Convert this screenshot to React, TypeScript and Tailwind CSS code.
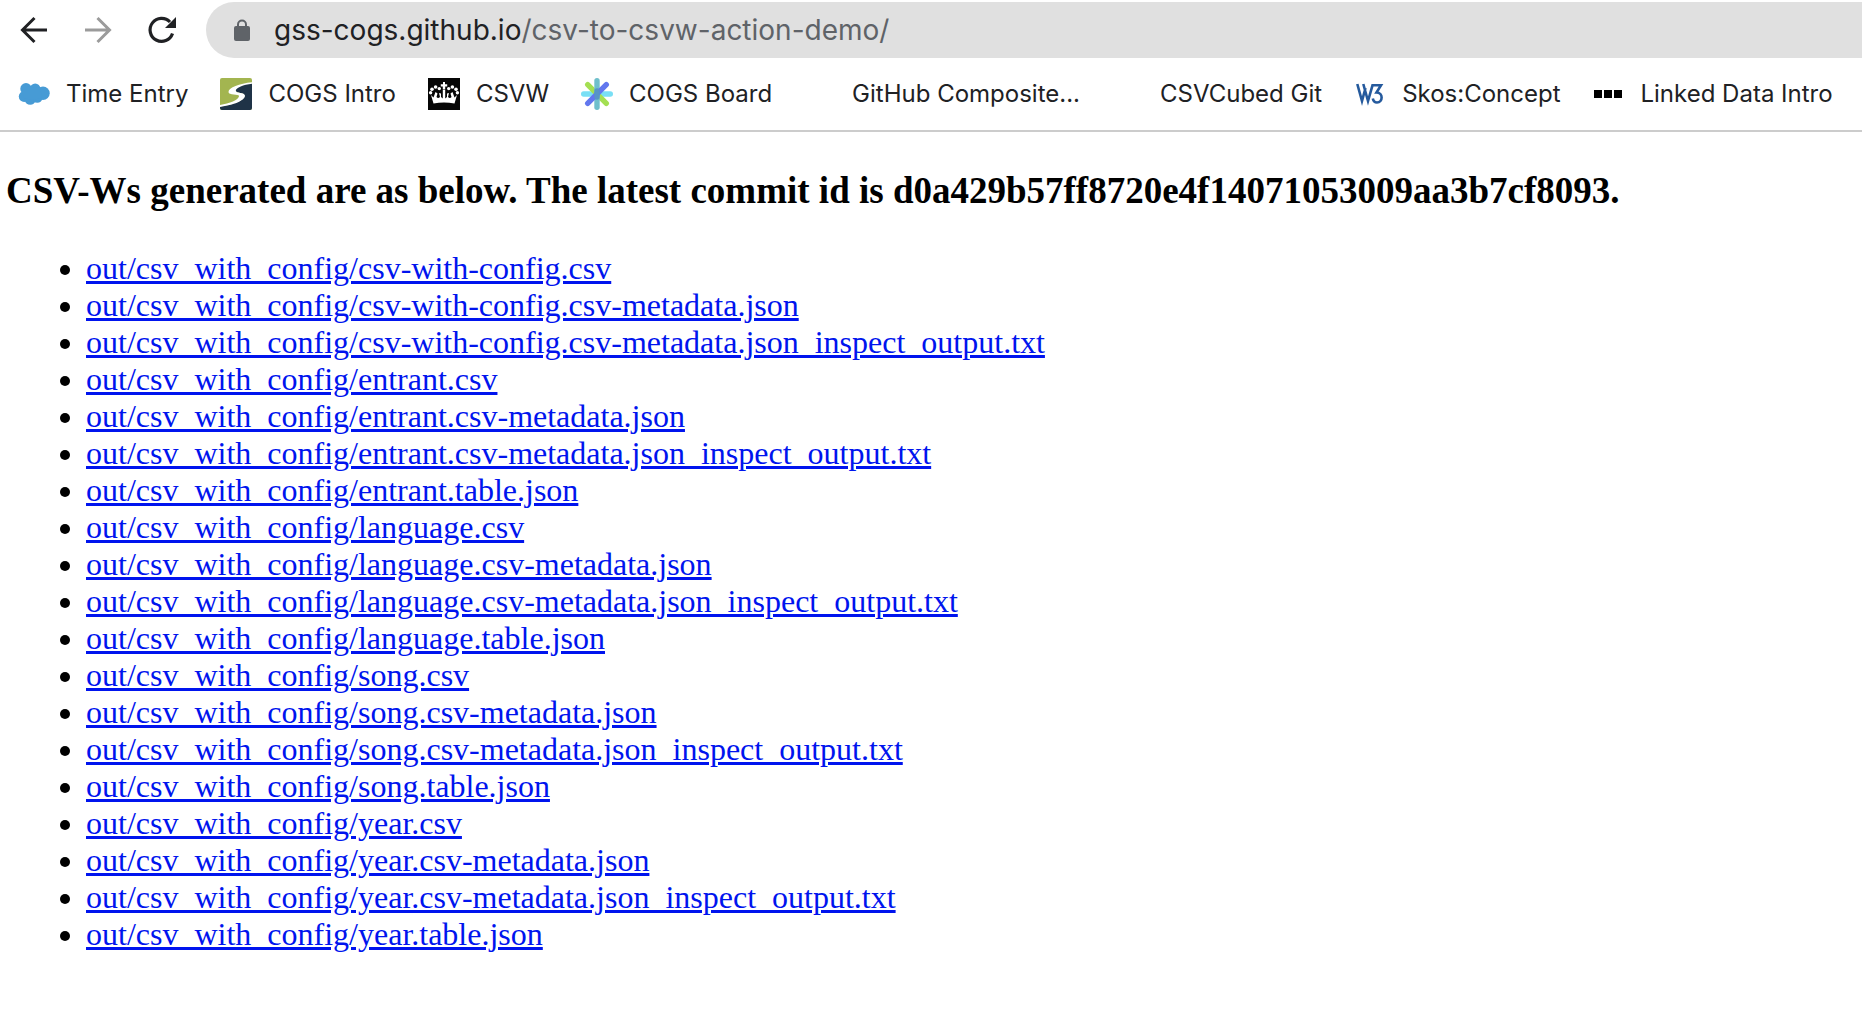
import React from "react";

const CloudIcon = () => (
  <svg viewBox="0 0 32 32" className="h-8 w-8" fill="#479bd5">
    <circle cx="8" cy="10.800" r="5.700" />
    <circle cx="17.200" cy="10.600" r="5.200" />
    <circle cx="25" cy="15.300" r="6.700" />
    <circle cx="6.200" cy="18.500" r="5.400" />
    <circle cx="12.200" cy="21.400" r="5.400" />
    <circle cx="19.200" cy="19.500" r="5.300" />
    <path d="M8 8L14 9L22 10L24 20L14 22L6 20L4 14Z" />
  </svg>
);

const CogsIcon = () => (
  <svg viewBox="0 0 32 32" className="h-8 w-8">
    <clipPath id="cogs-tile"><rect width="32" height="32" rx="2" /></clipPath>
    <g clipPath="url(#cogs-tile)">
      <rect width="32" height="32" fill="#a3b550" />
      <path d="M32 5C22 6 15.500 9 15.500 12.500C15.500 15.500 25 14 24.500 18C24 23 12 27 0 28.500V32H32Z" fill="#1f3347" />
      <path d="M33 4.200C20 5.200 8.500 9.500 8.500 14C8.500 17.800 19.500 15.500 19 18.300C18.500 22 9 26 -1 27V29C13 27.500 25 22.500 25 17.800C25 14 15.500 15.500 15.800 12.600C16 9.500 24 6.500 33 5.600Z" fill="#fff" />
    </g>
  </svg>
);

const CrownIcon = () => (
  <svg viewBox="0 0 32 32" className="h-8 w-8">
    <rect width="32" height="32" fill="#060606" />
    <g fill="#fff">
      <path d="M15 4h2v2.200h2.200v2.200H17.200v3h-2.400v-3h-2V6.200H15Z" />
      <circle cx="11.300" cy="10.600" r="1.700" /><circle cx="20.700" cy="10.600" r="1.700" />
      <circle cx="7.600" cy="9" r="1.800" /><circle cx="24.400" cy="9" r="1.800" />
      <circle cx="4" cy="11.200" r="1.800" /><circle cx="28" cy="11.200" r="1.800" />
      <circle cx="2.600" cy="14.800" r="1.700" /><circle cx="29.400" cy="14.800" r="1.700" />
      <path d="M3 17L5.500 25.500Q16 23.500 26.500 25.500L29 17L26.500 19.500L24.500 14L22.500 15.500L23.500 19Q22 21 20 19L21 15L19 15.500V19L17.200 20.500V12H14.800V20.500L13 19V15.500L11 15L12 19Q10 21 8.500 19L9.500 15.500L7.500 14L5.500 19.500Z" />
    </g>
  </svg>
);

const BoardIcon = () => (
  <svg viewBox="0 0 32 32" className="h-8 w-8" strokeWidth="5.400" strokeLinecap="round">
    <path d="M2.700 16H29.300" stroke="#79dff5" />
    <path d="M6.700 6.700L25.300 25.300" stroke="#a4df52" />
    <path d="M16 2.700V29.300" stroke="#6fbfcb" />
    <path d="M25.300 6.700L6.700 25.300" stroke="#6277ee" />
    <path d="M16 13V19" stroke="#5795c6" />
  </svg>
);

const W3Icon = () => (
  <svg viewBox="0 0 32 32" className="h-8 w-8" fill="none" stroke="#255a9d" strokeWidth="2.600">
    <path d="M3.300 6L8 23L11.500 10M9.300 6L14 23L18.500 7.300H27L22.500 14.500C29.500 14.500 29 24.500 23 24.500C20.500 24.500 19.300 23 18.800 20.500" />
  </svg>
);

const DotsIcon = () => (
  <svg viewBox="0 0 32 32" className="h-8 w-8" fill="#000">
    <path d="M2 12h8v8H2zM12 12h8v8h-8zM22 12h8v8h-8z" />
  </svg>
);

const bookmarks = [
  { label: "Time Entry", Icon: CloudIcon },
  { label: "COGS Intro", Icon: CogsIcon },
  { label: "CSVW", Icon: CrownIcon },
  { label: "COGS Board", Icon: BoardIcon },
  { label: "GitHub Composite...", Icon: null },
  { label: "CSVCubed Git", Icon: null },
  { label: "Skos:Concept", Icon: W3Icon },
  { label: "Linked Data Intro", Icon: DotsIcon },
];

const files = [
  "csv-with-config.csv",
  "csv-with-config.csv-metadata.json",
  "csv-with-config.csv-metadata.json_inspect_output.txt",
  "entrant.csv",
  "entrant.csv-metadata.json",
  "entrant.csv-metadata.json_inspect_output.txt",
  "entrant.table.json",
  "language.csv",
  "language.csv-metadata.json",
  "language.csv-metadata.json_inspect_output.txt",
  "language.table.json",
  "song.csv",
  "song.csv-metadata.json",
  "song.csv-metadata.json_inspect_output.txt",
  "song.table.json",
  "year.csv",
  "year.csv-metadata.json",
  "year.csv-metadata.json_inspect_output.txt",
  "year.table.json",
];

function Toolbar() {
  return (
    <div className="flex h-[60px] items-center pl-[18px]">
      <div className="flex gap-8">
        <button type="button" aria-label="Back" className="h-8 w-8">
          <svg viewBox="0 0 32 32" className="h-8 w-8" fill="none" stroke="#202124" strokeWidth="3">
            <path d="M29 16H5M16.500 4L4.500 16L16.500 28" />
          </svg>
        </button>
        <button type="button" aria-label="Forward" className="h-8 w-8">
          <svg viewBox="0 0 32 32" className="h-8 w-8" fill="none" stroke="#9b9b9b" strokeWidth="3">
            <path d="M3 16H27M15.500 4L27.500 16L15.500 28" />
          </svg>
        </button>
        <button type="button" aria-label="Reload" className="h-8 w-8">
          <svg viewBox="0 0 32 32" className="h-8 w-8">
            <path d="M26.500 19.500A11.500 11.500 0 1 1 24 8" fill="none" stroke="#202124" strokeWidth="3.200" />
            <path d="M30 3V14H19Z" fill="#202124" />
          </svg>
        </button>
      </div>
      <div className="ml-7 flex h-14 flex-1 items-center rounded-l-full bg-[#e0e0e0] pl-7 text-[28px]">
        <svg viewBox="0 0 16 22" className="h-[22px] w-4">
          <path d="M4 9V5.500a4 4 0 0 1 8 0V9" fill="none" stroke="#5f6368" strokeWidth="2" />
          <rect y="7" width="16" height="15" rx="2" fill="#5f6368" />
        </svg>
        <label htmlFor="address" className="ml-6 text-[#202124]">gss-cogs.github.io</label>
        <input
          id="address"
          type="text"
          defaultValue="/csv-to-csvw-action-demo/"
          className="min-w-0 flex-1 bg-transparent text-[#5f6368] outline-none"
        />
      </div>
    </div>
  );
}

export default function App() {
  return (
    <div className="min-h-screen overflow-x-hidden bg-white">
      <header className="border-b-2 border-[#cccccc] font-['Inter',sans-serif]">
        <Toolbar />
        <nav aria-label="Bookmarks" className="flex h-[70px] items-center gap-8 pb-0.5 pl-[18px] text-2xl text-[#202124]">
          {bookmarks.map(({ label, Icon }) => (
            <a key={label} href="#" className="flex shrink-0 items-center gap-4 whitespace-nowrap">
              <span className="h-8 w-8">{Icon && <Icon />}</span>
              {label}
            </a>
          ))}
        </nav>
      </header>
      <main className="font-['Liberation_Serif',serif] text-[32px] leading-[37px] text-black">
        <h3 className="mt-[37px] px-[6px] text-[37px] leading-[43px] font-bold">
          CSV-Ws generated are as below. The latest commit id is d0a429b57ff8720e4f14071053009aa3b7cf8093.
        </h3>
        <ul className="mt-[38px] list-disc pl-[86px] [font-variant-ligatures:common-ligatures] [text-rendering:optimizeLegibility]">
          {files.map((file) => (
            <li key={file}>
              <a href={"out/csv_with_config/" + file} className="text-[#0014ee] underline decoration-3">
                {"out/csv_with_config/" + file}
              </a>
            </li>
          ))}
        </ul>
      </main>
    </div>
  );
}
